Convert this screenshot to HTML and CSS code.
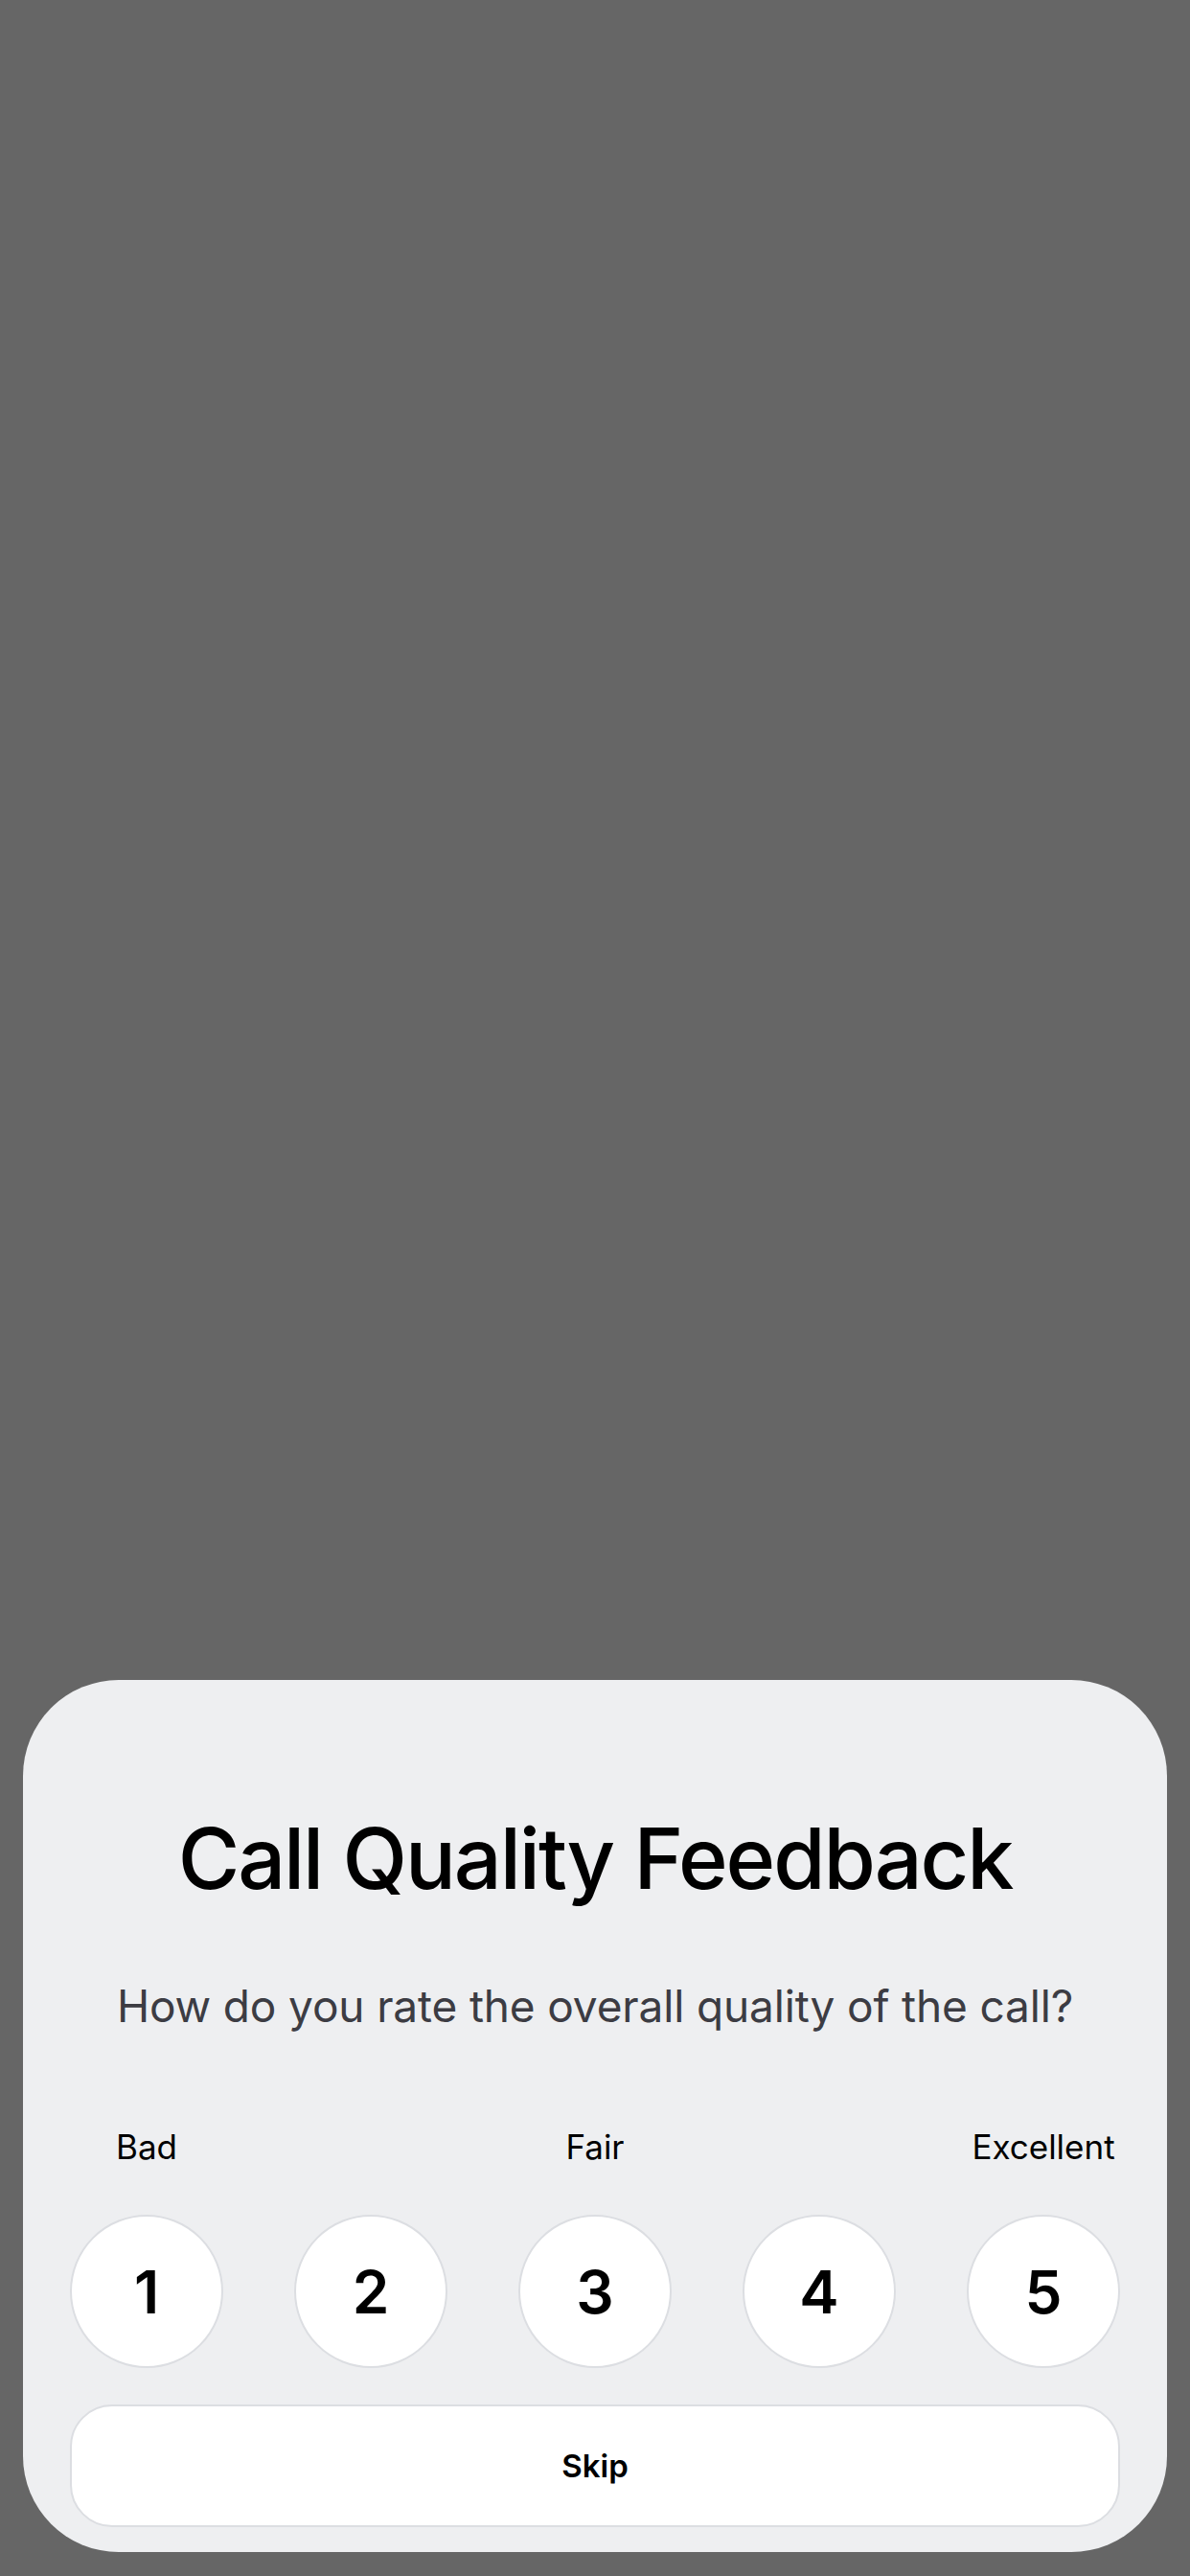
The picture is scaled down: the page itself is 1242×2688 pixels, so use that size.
FILE: index.html
```html
<!DOCTYPE html>
<html lang="en">
<head>
<meta charset="utf-8">
<title>Call Quality Feedback</title>
<link rel="stylesheet" href="styles.css">
</head>
<body>
  <div class="screen">
    <section class="sheet">
      <h1 class="title">Call Quality Feedback</h1>
      <p class="subtitle">How do you rate the overall quality of the call?</p>
      <div class="labels">
        <span class="label l1">Bad</span>
        <span class="label l3">Fair</span>
        <span class="label l5">Excellent</span>
      </div>
      <div class="ratings">
        <button class="rate">1</button>
        <button class="rate">2</button>
        <button class="rate">3</button>
        <button class="rate">4</button>
        <button class="rate">5</button>
      </div>
      <button class="skip">Skip</button>
    </section>
  </div>
</body>
</html>
```

FILE: styles.css
```css
* { box-sizing: border-box; }
html, body {
  margin: 0;
  padding: 0;
  background: #666666;
}
body {
  font-family: Inter, "Noto Sans", "Liberation Sans", sans-serif;
  color: #000;
}
.screen {
  width: 1242px;
  height: 2688px;
  display: flex;
  flex-direction: column;
  justify-content: flex-end;
  padding: 0 24px 25px 24px;
}
.sheet {
  background: #eeeff1;
  border-radius: 100px;
  padding: 133px 49px 26px 49px;
  display: flex;
  flex-direction: column;
  align-items: stretch;
}
.title {
  margin: 0;
  font-size: 88px;
  line-height: 107px;
  font-weight: 500;
  text-align: center;
  letter-spacing: -2.1px;
}
.subtitle {
  margin: 70px 0 0 0;
  font-size: 46px;
  line-height: 60px;
  font-weight: 400;
  color: #3c3c43;
  text-align: center;
  letter-spacing: -0.15px;
}
.labels {
  margin-top: 97px;
  display: grid;
  grid-template-columns: repeat(5, 160px);
  justify-content: space-between;
  font-size: 35px;
  line-height: 40px;
}
.label {
  text-align: center;
  white-space: nowrap;
  display: flex;
  justify-content: center;
}
.l1 { grid-column: 1; }
.l3 { grid-column: 3; }
.l5 { grid-column: 5; }
.ratings {
  margin-top: 51px;
  display: flex;
  justify-content: space-between;
}
.rate {
  width: 160px;
  height: 160px;
  border-radius: 50%;
  border: 2px solid #dcdee2;
  background: #ffffff;
  font-family: inherit;
  font-size: 62px;
  font-weight: 600;
  color: #000;
  padding: 0;
  display: flex;
  align-items: center;
  justify-content: center;
}
.skip {
  margin-top: 38px;
  height: 128px;
  width: 100%;
  border-radius: 44px;
  border: 2px solid #dcdee2;
  background: #ffffff;
  font-family: inherit;
  font-size: 33px;
  font-weight: 600;
  color: #000;
  padding: 0;
}
```
